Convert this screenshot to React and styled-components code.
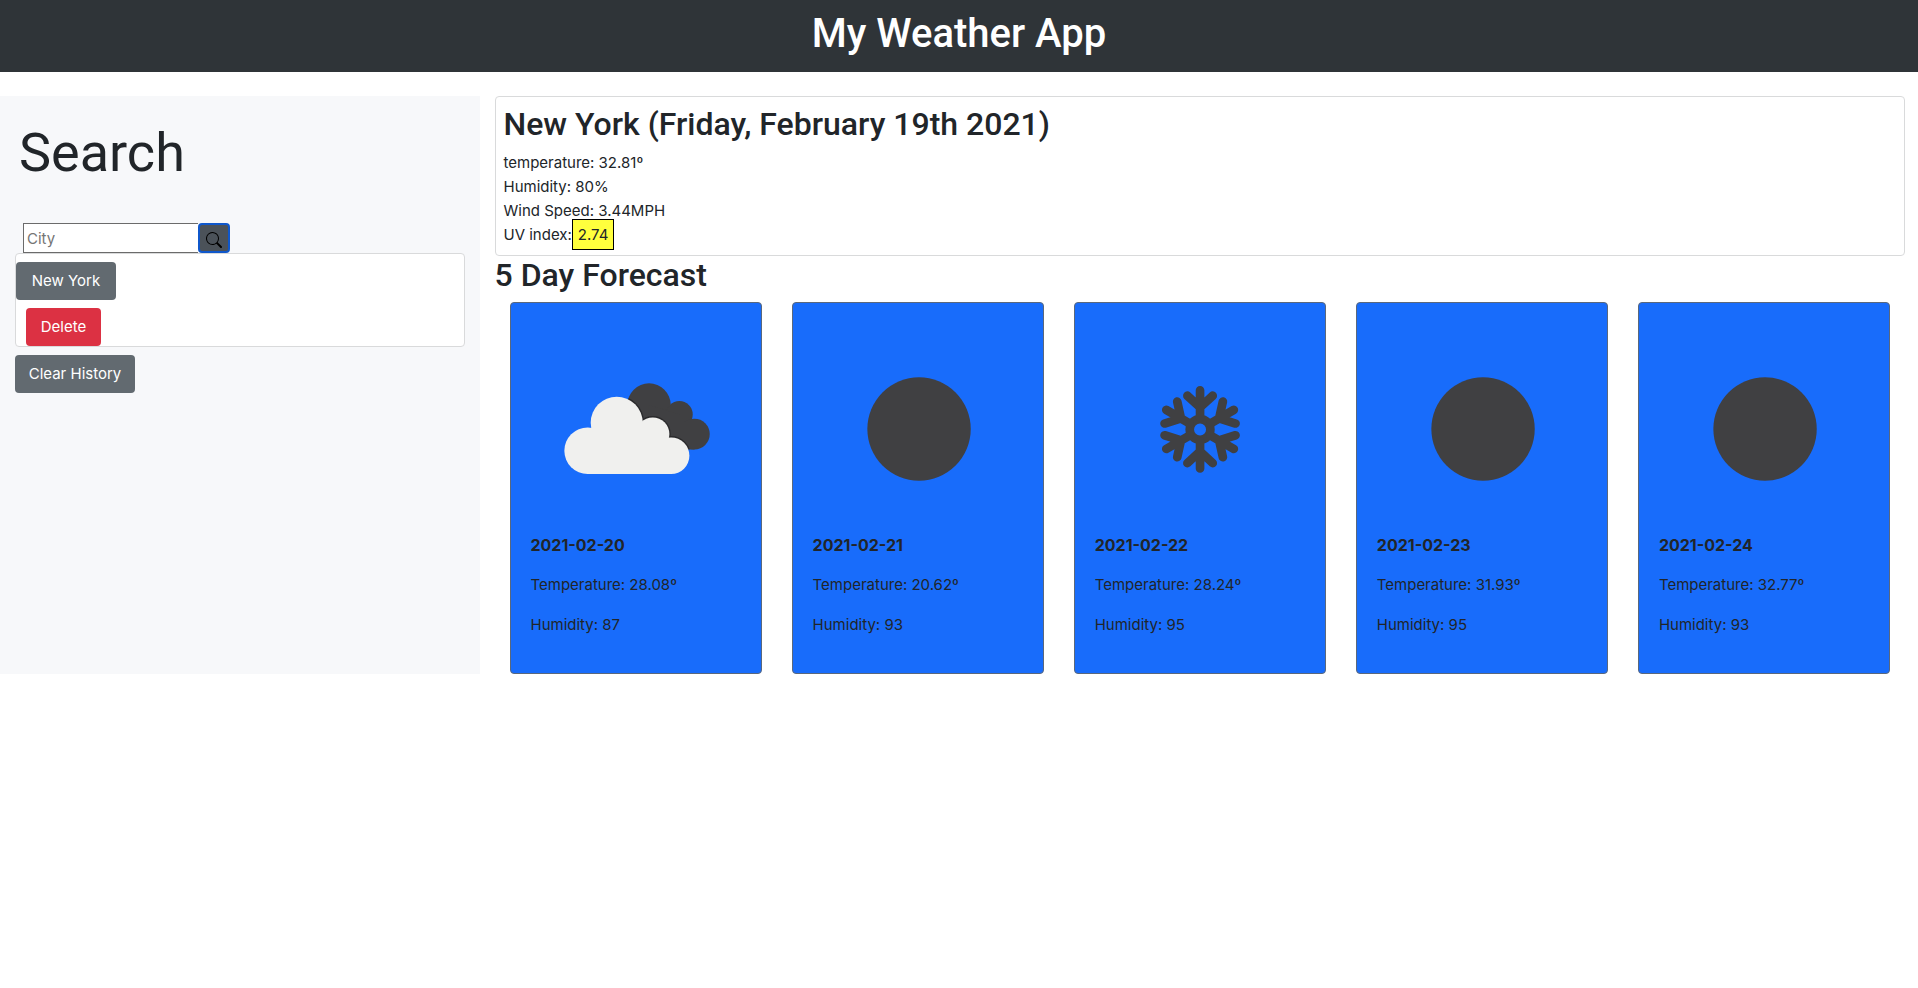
import React from "react";
import styled, { createGlobalStyle } from "styled-components";
import { BsSearch } from "react-icons/bs";

const GlobalStyle = createGlobalStyle`
  *, *::before, *::after { box-sizing: border-box; }
  body {
    margin: 0;
    background: #fff;
    color: #212529;
    font-family: Inter, "Liberation Sans", sans-serif;
    font-size: 15px;
    line-height: 24px;
  }
  h1, h2, p { margin: 0; }
  h1, h2 { font-family: Roboto, "Liberation Sans", sans-serif; }
  button, input { font: inherit; }
`;

const Header = styled.header`
  height: 72px;
  padding-top: 10px;
  margin-bottom: 24px;
  background: #2f3438;
  color: #fff;
  text-align: center;
`;

const AppTitle = styled.h1`
  font-size: 40px;
  line-height: 48px;
  font-weight: 500;
`;

const Layout = styled.div`
  display: grid;
  grid-template-columns: 25% 1fr;
`;

const Sidebar = styled.aside`
  padding: 15px;
  background: #f7f8fa;
`;

const SearchTitle = styled.h2`
  padding: 8px 4px 0;
  margin-bottom: 36px;
  font-size: 54px;
  line-height: 68px;
  font-weight: 400;
`;

const SearchForm = styled.form`
  display: flex;
  padding-left: 8px;
`;

const CityInput = styled.input`
  width: 175px;
  height: 30px;
  padding: 1px 3px;
  border: 1px solid #6b6b6b;
  border-right: 0;
  border-radius: 0;
  background: #fff;
  color: #212529;
  &::placeholder { color: #757575; opacity: 1; }
`;

const SearchButton = styled.button`
  display: flex;
  align-items: center;
  justify-content: center;
  width: 32px;
  height: 30px;
  padding: 3px 0 0;
  border: 2px solid #0f57cb;
  border-radius: 4px;
  background: #4b5259;
  color: #000;
`;

const Panel = styled.div`
  border: 1px solid #d9dadb;
  border-radius: 4px;
  background: #fff;
`;

const History = styled(Panel)`
  display: flex;
  flex-direction: column;
  align-items: flex-start;
  gap: 8px;
  padding-top: 8px;
  margin-bottom: 8px;
`;

const Button = styled.button`
  height: 38px;
  min-width: ${(p) => p.$width};
  margin-left: ${(p) => (p.$indent ? "10px" : "0")};
  padding: 0 8px;
  border: 0;
  border-radius: 4px;
  background: ${(p) => (p.$danger ? "#dc3143" : "#626a70")};
  color: #fff;
`;

const Main = styled.main`
  padding: 0 13px 0 15px;
`;

const Current = styled(Panel)`
  padding: 8px;
`;

const SectionTitle = styled.h2`
  margin-bottom: 8px;
  font-size: 32px;
  line-height: 38px;
  font-weight: 500;
`;

const UvIndex = styled.span`
  padding: 5px;
  border: 1px solid #000;
  background: #ffff3d;
`;

const Forecast = styled.section`
  display: grid;
  grid-template-columns: repeat(5, 1fr);
  gap: 30px;
  padding: 0 15px;
`;

const DayCard = styled.article`
  padding: 20px;
  border: 1px solid #5a687c;
  border-radius: 4px;
  background: #186cfb;
  & > svg { display: block; width: 100%; }
  & > p { margin-bottom: 16px; }
`;

const DayDate = styled.p`
  font-size: 16px;
  font-weight: 700;
`;

const DARK = "#404042";

const BackCloud = () => (
  <>
    <circle cx="354" cy="246" r="65" />
    <circle cx="445" cy="274" r="40" />
    <circle cx="490" cy="333" r="46" />
    <path d="M354 246 L445 274 L490 333 V379 H340 Z" />
  </>
);

const FrontCloud = () => (
  <>
    <circle cx="170" cy="383" r="70" />
    <circle cx="257" cy="299" r="78" />
    <circle cx="365" cy="333" r="50" />
    <circle cx="420" cy="398" r="55" />
    <path d="M170 453 V370 L257 299 H365 L420 398 V453 Z" />
  </>
);

function Clouds() {
  return (
    <svg viewBox="0 0 630 630" aria-hidden="true">
      <clipPath id="back-cloud">
        <BackCloud />
      </clipPath>
      <g fill={DARK}><BackCloud /></g>
      <g clipPath="url(#back-cloud)" fill="none" stroke="#2a2a2c" strokeWidth="8">
        <FrontCloud />
      </g>
      <g fill="#f0f0ee"><FrontCloud /></g>
    </svg>
  );
}

function Disc() {
  return (
    <svg viewBox="0 0 630 630" aria-hidden="true">
      <circle cx="318" cy="318" r="155" fill={DARK} />
    </svg>
  );
}

function Snowflake() {
  return (
    <svg viewBox="0 0 630 630" aria-hidden="true">
      <g transform="translate(315 319)" fill="none" stroke={DARK} strokeWidth="26" strokeLinecap="round" strokeLinejoin="round">
        <circle r="31" />
        {[0, 60, 120, 180, 240, 300].map((angle) => (
          <path key={angle} transform={`rotate(${angle})`} d="M0 -36 V-117 M-38 -101 L0 -66 L38 -101" />
        ))}
      </g>
    </svg>
  );
}

const days = [
  { date: "2021-02-20", temperature: "28.08", humidity: 87, Icon: Clouds },
  { date: "2021-02-21", temperature: "20.62", humidity: 93, Icon: Disc },
  { date: "2021-02-22", temperature: "28.24", humidity: 95, Icon: Snowflake },
  { date: "2021-02-23", temperature: "31.93", humidity: 95, Icon: Disc },
  { date: "2021-02-24", temperature: "32.77", humidity: 93, Icon: Disc },
];

export default function App() {
  return (
    <>
      <GlobalStyle />
      <Header>
        <AppTitle>My Weather App</AppTitle>
      </Header>
      <Layout>
        <Sidebar>
          <SearchTitle>Search</SearchTitle>
          <SearchForm onSubmit={(e) => e.preventDefault()}>
            <CityInput type="text" placeholder="City" aria-label="City" />
            <SearchButton type="submit" aria-label="Search">
              <BsSearch size={16} />
            </SearchButton>
          </SearchForm>
          <History>
            <Button type="button" $width="100px">New York</Button>
            <Button type="button" $width="75px" $danger $indent>Delete</Button>
          </History>
          <Button type="button" $width="120px">Clear History</Button>
        </Sidebar>
        <Main>
          <Current>
            <SectionTitle>New York (Friday, February 19th 2021)</SectionTitle>
            <p>temperature: 32.81º</p>
            <p>Humidity: 80%</p>
            <p>Wind Speed: 3.44MPH</p>
            <p>UV index:<UvIndex>2.74</UvIndex></p>
          </Current>
          <SectionTitle>5 Day Forecast</SectionTitle>
          <Forecast>
            {days.map(({ date, temperature, humidity, Icon }) => (
              <DayCard key={date}>
                <Icon />
                <DayDate>{date}</DayDate>
                <p>Temperature: {temperature}º</p>
                <p>Humidity: {humidity}</p>
              </DayCard>
            ))}
          </Forecast>
        </Main>
      </Layout>
    </>
  );
}
